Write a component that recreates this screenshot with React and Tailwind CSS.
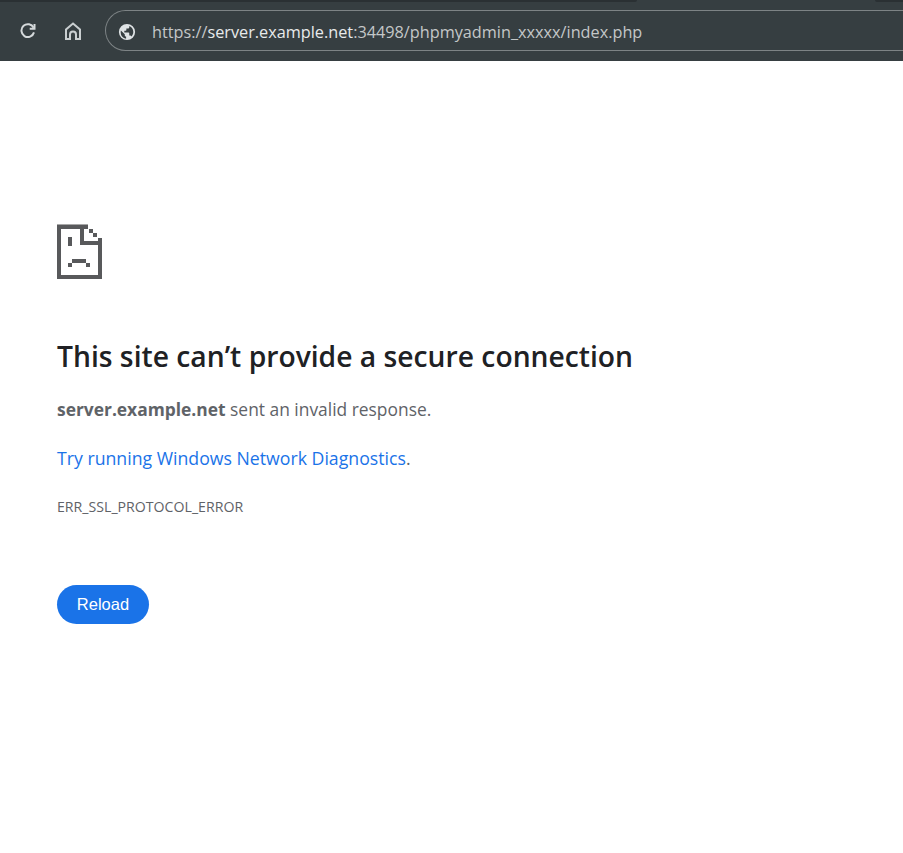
function SadPage() {
  return (
    <svg width="45" height="55" viewBox="0 0 45 55" shapeRendering="crispEdges" fill="#58595b" className="block shrink-0">
      <rect x="0" y="0" width="31" height="1" fill="#a8a8a8" />
      <path fillRule="evenodd" d="M0 1H31V5H27V17H41V14H45V55H0ZM4 5V51H41V21H23V5Z" />
      <rect x="11" y="13" width="4" height="9" />
      <rect x="32" y="5" width="4" height="4" />
      <rect x="36" y="9" width="4" height="4" />
      <rect x="15" y="35" width="14" height="4" />
      <rect x="11" y="39" width="4" height="4" />
      <rect x="29" y="39" width="4" height="4" />
    </svg>
  );
}

function ReloadIcon() {
  return (
    <svg width="16" height="16" viewBox="0 0 16 16" fill="none" stroke="#d5d9db" strokeWidth="2" className="shrink-0">
      <path d="M13.600 4.800A6.400 6.400 0 1 0 14 9.400" />
      <path d="M14.500 1V5.800H9.700" />
    </svg>
  );
}

function HomeIcon() {
  return (
    <svg width="16" height="18" viewBox="0 0 16 18" fill="none" stroke="#c9ced0" strokeWidth="2" className="shrink-0">
      <path d="M8 1.500L15 7.500V17H11V12.500A3 3 0 0 0 5 12.500V17H1V7.500Z" />
    </svg>
  );
}

function Globe() {
  return (
    <svg width="18" height="18" viewBox="0 0 20 20" fill="#dfe3e5" className="shrink-0">
      <path d="M10 1a9 9 0 1 0 0 18 9 9 0 0 0 0-18ZM3 10c0-.6.1-1.200.2-1.700L7.500 12.500v1c0 .8.700 1.500 1.500 1.500v2.400A7 7 0 0 1 3 10Zm11.900 4.900c-.2-.6-.8-1-1.400-1h-1v-2.500c0-.4-.3-.8-.8-.8H7v-2h1.500c.4 0 .8-.3.800-.8V6.200h1.700c.8 0 1.500-.7 1.500-1.500v-1.300a7 7 0 0 1 2.400 11.500Z" />
    </svg>
  );
}

export default function App() {
  return (
    <div className="min-h-[853px] bg-white font-['Open_Sans',sans-serif]">
      {/* Browser toolbar */}
      <div className="flex h-[61px] flex-col overflow-hidden bg-[#363e41]">
        <div className="flex h-[2px] shrink-0 justify-between">
          <div className="w-[637px] rounded-br-[2px] bg-[#2a3033]" />
          <div className="w-[28px] rounded-bl-[2px] bg-[#2a3033]" />
        </div>
        <div className="mt-[8px] flex items-center pl-[20px]">
          <ReloadIcon />
          <div className="ml-[29px]">
            <HomeIcon />
          </div>
          <div className="ml-[24px] flex h-[41px] w-[830px] shrink-0 items-center rounded-l-[21px] border border-r-0 border-[#7d8385] pl-[12px]">
            <div className="pt-[2px]">
              <Globe />
            </div>
            <span className="ml-[16px] pt-[4px] text-[16.25px] whitespace-nowrap text-[#c4c7c8]">
              https://<span className="text-[#e8eaeb]">server.example.net</span>:34498/phpmyadmin_xxxxx/index.php
            </span>
          </div>
        </div>
      </div>

      {/* Error page */}
      <div className="flex flex-col items-start pl-[57px] pt-[163px]">
        <SadPage />
        <h1 className="mt-[59px] text-[28.25px] leading-[36px] font-semibold whitespace-nowrap text-[#202124]">
          This site can’t provide a secure connection
        </h1>
        <p className="mt-[23px] text-[17.4px] leading-[24px] text-[#5f6368]">
          <span className="font-bold">server.example.net</span> sent an invalid response.
        </p>
        <p className="mt-[25px] text-[17.7px] leading-[24px] text-[#5f6368]">
          <span className="text-[#1a73e8]">Try running Windows Network Diagnostics</span>.
        </p>
        <p className="mt-[28px] text-[14.15px] leading-[18px] text-[#5f6368]">
          ERR_SSL_PROTOCOL_ERROR
        </p>
        <button className="mt-[69px] flex h-[39px] w-[92px] items-center justify-center rounded-[20px] bg-[#1a73e8] font-['Liberation_Sans',sans-serif] text-[16.5px] text-white">
          Reload
        </button>
      </div>
    </div>
  );
}
